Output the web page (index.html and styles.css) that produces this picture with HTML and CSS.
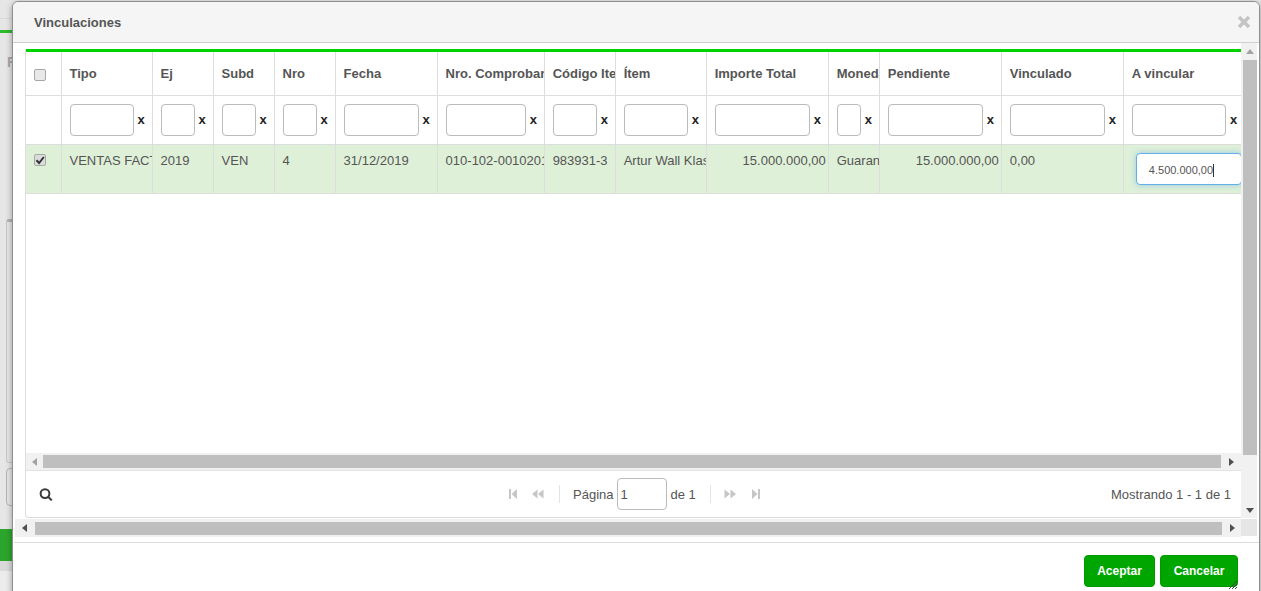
FILE: index.html
```html
<!DOCTYPE html>
<html lang="es">
<head>
<meta charset="utf-8">
<title>Vinculaciones</title>
<link rel="stylesheet" href="styles.css">
</head>
<body>
<div class="page">
  <div class="page-top"></div>
  <div class="page-green"></div>
  <div class="page-letter">F</div>
  <div class="page-panel"></div>
  <div class="page-box"></div>
  <div class="page-band"></div>
  <div class="page-btn"></div>
  <div class="page-foot"></div>
</div>
<section class="modal">
  <header class="modal-head">
    <h1>Vinculaciones</h1>
    <svg class="close" viewBox="0 0 14 14" width="14" height="14"><path d="M2 2l10 10M12 2L2 12"/></svg>
  </header>
  <div class="modal-body">
    <div class="main">
      <div class="grid">
        <div class="table-wrap">
          <table>
            <colgroup>
              <col class="c-check"><col class="c-tipo"><col class="c-small"><col class="c-small"><col class="c-small"><col class="c-fecha"><col class="c-comp"><col class="c-cod"><col class="c-tipo"><col class="c-imp"><col class="c-mon"><col class="c-imp"><col class="c-imp"><col class="c-av">
            </colgroup>
            <thead>
              <tr class="heads">
                <th class="check-cell"><span class="check head-check"></span></th>
                <th>Tipo</th><th>Ej</th><th>Subd</th><th>Nro</th><th>Fecha</th><th>Nro. Comprobante</th><th>Código Item</th><th>Ítem</th><th>Importe Total</th><th>Moneda</th><th>Pendiente</th><th>Vinculado</th><th>A vincular</th>
              </tr>
              <tr class="filters">
                <th></th>
                <th><div class="filter"><input type="text"><b>x</b></div></th>
                <th><div class="filter"><input type="text"><b>x</b></div></th>
                <th><div class="filter"><input type="text"><b>x</b></div></th>
                <th><div class="filter"><input type="text"><b>x</b></div></th>
                <th><div class="filter"><input type="text"><b>x</b></div></th>
                <th><div class="filter"><input type="text"><b>x</b></div></th>
                <th><div class="filter"><input type="text"><b>x</b></div></th>
                <th><div class="filter"><input type="text"><b>x</b></div></th>
                <th><div class="filter"><input type="text"><b>x</b></div></th>
                <th><div class="filter"><input type="text"><b>x</b></div></th>
                <th><div class="filter"><input type="text"><b>x</b></div></th>
                <th><div class="filter"><input type="text"><b>x</b></div></th>
                <th><div class="filter"><input type="text"><b>x</b></div></th>
              </tr>
            </thead>
            <tbody>
              <tr class="row">
                <td class="check-cell"><span class="check on"><svg viewBox="0 0 12 12" width="12" height="12"><path d="M2.500 6.200l2.600 2.800L9.800 3"/></svg></span></td>
                <td>VENTAS FACTURA</td><td>2019</td><td>VEN</td><td>4</td><td>31/12/2019</td><td>010-102-0010201</td><td>983931-3</td><td>Artur Wall Klassen</td>
                <td class="num">15.000.000,00</td><td>Guaraníes</td><td class="num">15.000.000,00</td><td>0,00</td>
                <td class="edit-cell"><div class="edit">4.500.000,00<span class="caret"></span></div></td>
              </tr>
            </tbody>
          </table>
        </div>
        <div class="hbar inner">
          <span class="arrow dim"><svg viewBox="0 0 6 8" width="6" height="8"><path d="M5 0v8L0 4z"/></svg></span>
          <span class="thumb"></span>
          <span class="arrow"><svg viewBox="0 0 6 8" width="6" height="8"><path d="M1 0v8l5-4z"/></svg></span>
        </div>
        <div class="pager">
          <svg class="search" viewBox="0 0 14 14" width="14" height="14"><circle cx="6" cy="6.600" r="4.400"/><path d="M9.400 10l3.400 3.400"/></svg>
          <div class="pager-mid">
            <svg class="pg" viewBox="0 0 10 12" width="10" height="12"><path d="M1 1h2v10H1zM9 1v10L3.500 6z"/></svg>
            <svg class="pg dbl" viewBox="0 0 13 12" width="13" height="12"><path d="M6.500 1.500v9L1 6zM12.500 1.500v9L7 6z"/></svg>
            <span class="sep first"></span>
            <span class="pg-label">Página</span>
            <input class="pg-input" type="text" value="1">
            <span class="pg-of">de 1</span>
            <span class="sep"></span>
            <svg class="pg dbl" viewBox="0 0 13 12" width="13" height="12"><path d="M.5 1.500v9L6 6zM6.500 1.500v9L12 6z"/></svg>
            <svg class="pg" viewBox="0 0 10 12" width="10" height="12"><path d="M1 1v10L6.500 6zM7 1h2v10H7z"/></svg>
          </div>
          <span class="count">Mostrando 1 - 1 de 1</span>
        </div>
      </div>
    </div>
    <div class="vbar">
      <span class="varrow dim"><svg viewBox="0 0 8 6" width="8" height="6"><path d="M0 5h8L4 0z"/></svg></span>
      <span class="vthumb"></span>
      <span class="varrow last"><svg viewBox="0 0 8 6" width="8" height="6"><path d="M0 1h8L4 6z"/></svg></span>
    </div>
    <div class="hbar outer">
      <span class="arrow"><svg viewBox="0 0 6 8" width="6" height="8"><path d="M5 0v8L0 4z"/></svg></span>
      <span class="thumb"></span>
      <span class="arrow"><svg viewBox="0 0 6 8" width="6" height="8"><path d="M1 0v8l5-4z"/></svg></span>
    </div>
    <div class="corner"></div>
  </div>
  <footer class="modal-foot">
    <button class="btn accept" type="button">Aceptar</button>
    <button class="btn cancel" type="button">Cancelar</button>
    <svg class="resizer" viewBox="0 0 8 8" width="8" height="8"><path d="M0 8l8-8M3 8l5-5M6 8l2-2"/></svg>
  </footer>
</section>
</body>
</html>
```

FILE: styles.css
```css
* { box-sizing: border-box; }
html, body { margin: 0; height: 100%; overflow: hidden; }
body {
  position: relative;
  background: #e6e6e6;
  font-family: "Liberation Sans", Arial, sans-serif;
  font-size: 13px;
  color: #555;
}

/* dimmed page behind the dialog */
.page { position: absolute; inset: 0; }
.page-top { position: absolute; left: 0; top: 0; width: 13px; height: 19px; background: #e6e6e6; border-bottom: 1px solid #d8d8d8; }
.page-green { position: absolute; left: 0; top: 30px; width: 13px; height: 3px; background: #2dbb2d; }
.page-letter { position: absolute; left: 7px; top: 54px; font-weight: 700; font-size: 14px; color: #a8a8a8; }
.page-panel { position: absolute; left: 6px; top: 219px; width: 20px; height: 244px; border: 1px solid #c8c8c8; border-top: 3px solid #b5b5b5; border-radius: 3px; }
.page-box { position: absolute; left: 6px; top: 468px; width: 20px; height: 38px; border: 1px solid #b5b5b5; border-radius: 4px; }
.page-band { position: absolute; left: 0; top: 561px; width: 13px; height: 10px; background: #dadada; }
.page-btn { position: absolute; left: 0; top: 529px; width: 20px; height: 32px; background: #2ca52c; }
.page-foot { position: absolute; left: 0; top: 571px; width: 13px; height: 20px; background: #ececec; }

/* dialog */
.modal {
  position: absolute;
  left: 12px;
  top: 1px;
  width: 1248px;
  height: 600px;
  background: #fff;
  border: 1px solid #8f8f8f;
  border-radius: 6px;
  box-shadow: 0 2px 6px rgba(0, 0, 0, .35);
  display: flex;
  flex-direction: column;
}
.modal-head {
  height: 41px;
  flex: none;
  padding: 0 8px 0 21px;
  background: #f5f5f5;
  border-bottom: 1px solid #cfcfcf;
  border-radius: 6px 6px 0 0;
  display: flex;
  align-items: center;
  justify-content: space-between;
}
.modal-head h1 { margin: 0; font-size: 13px; font-weight: 700; color: #555; }
.close { fill: none; stroke: #c4c4c4; stroke-width: 3.400; }

.modal-body {
  flex: none;
  display: grid;
  grid-template-columns: 1228px 16px;
  grid-template-rows: 475px 18px;
}
.main { padding: 6px 0 0 12px; min-width: 0; }
.grid {
  height: 469px;
  border-left: 1px solid #ddd;
  border-bottom: 1px solid #ddd;
  border-radius: 0 0 0 4px;
  display: flex;
  flex-direction: column;
}
.table-wrap {
  height: 404px;
  flex: none;
  overflow: hidden;
  border-top: 3px solid #00d200;
}
table {
  table-layout: fixed;
  border-collapse: collapse;
  width: 1219px;
}
.c-check { width: 35px; }
.c-tipo { width: 91px; }
.c-small { width: 61px; }
.c-fecha { width: 102px; }
.c-comp { width: 107px; }
.c-cod { width: 71px; }
.c-imp { width: 122px; }
.c-mon { width: 51px; }
.c-av { width: 121px; }

th, td {
  border: 1px solid #ddd;
  border-top: 0;
  padding: 0 0 0 8px;
  overflow: hidden;
  white-space: nowrap;
  text-align: left;
}
th:first-child, td:first-child { border-left: 0; }
.heads th { height: 43px; font-size: 13px; font-weight: 700; color: #555; vertical-align: middle; }
.filters th { height: 49px; vertical-align: middle; }
.row td { height: 49px; vertical-align: top; padding-top: 8px; font-size: 13px; background: #dff0d8; color: #555; }
.row td.num { text-align: right; padding: 8px 2px 0 0; }
.row td.check-cell { padding-top: 9px; }

.check {
  display: block;
  width: 12px;
  height: 12px;
  background: #e8e8e8;
  border: 1px solid #a8a8a8;
  border-radius: 2px;
}
.head-check { margin-top: 4px; }
.check.on { background: #dcdcdc; }
.check svg { display: block; margin: -1px; fill: none; stroke: #333; stroke-width: 2; }

.filter { display: flex; align-items: center; }
.filter input {
  flex: 1 1 0;
  min-width: 0;
  width: 0;
  height: 32px;
  margin: 0;
  padding: 0 6px;
  background: #fff;
  border: 1px solid #bbb;
  border-radius: 4px;
}
.filter b { flex: none; width: 18px; padding-left: 4px; font-size: 13px; font-weight: 700; color: #222; }

.row td.edit-cell { padding: 8px 0 0 12px; }
.edit {
  width: 106px;
  height: 32px;
  line-height: 32px;
  padding-left: 12px;
  font-size: 11px;
  color: #555;
  background: #fff;
  border: 1px solid #66afe9;
  border-radius: 4px;
  box-shadow: 0 0 6px rgba(102, 175, 233, .6);
}
.caret { display: inline-block; width: 1px; height: 13px; background: #333; vertical-align: -3px; }

/* scrollbars */
.hbar { display: flex; align-items: center; background: #f1f1f1; flex: none; }
.hbar.inner { height: 17px; }
.hbar.outer { height: 18px; margin: 1px 0 0 2px; }
.arrow { flex: none; width: 17px; display: flex; align-items: center; justify-content: center; }
.arrow svg, .varrow svg { display: block; fill: #505050; }
.arrow.dim svg, .varrow.dim svg { fill: #a3a3a3; }
.thumb { flex: 1; height: 13px; background: #bfbfbf; }
.hbar.outer .arrow:first-child { width: 20px; }
.hbar.outer .arrow:last-child { width: 19px; }
.hbar.inner .arrow:last-child { width: 20px; }

.vbar { background: #f1f1f1; display: flex; flex-direction: column; align-items: center; padding-left: 2px; }
.varrow { flex: none; height: 17px; display: flex; align-items: center; justify-content: center; }
.varrow.last { margin-top: auto; }
.vthumb { flex: none; height: 395px; width: 14px; background: #bfbfbf; }
.corner { background: #e6e6e6; margin-top: 1px; }

/* pager */
.pager {
  flex: 1;
  position: relative;
  display: flex;
  align-items: center;
  justify-content: space-between;
  border-top: 1px solid #e3e3e3;
  padding: 0 10px 0 13px;
  font-size: 13px;
  color: #555;
}
.search { fill: none; stroke: #3a3a3a; stroke-width: 2; }
.pager-mid { position: absolute; left: 482px; top: 0; bottom: 0; display: flex; align-items: center; }
.pg { flex: none; fill: #c6c6c6; }
.pg.dbl { margin-left: 13px; }
.sep { flex: none; width: 1px; height: 18px; background: #e3e3e3; margin: 0 13px 0 14px; }
.sep.first { margin-left: 15px; }
.sep + .pg.dbl { margin-left: 0; }
.pg.dbl + .pg { margin-left: 14px; }
.pg-input {
  width: 50px;
  height: 32px;
  margin: 0 3px 0 4px;
  padding: 0 2px;
  font: 13px "Liberation Sans", Arial, sans-serif;
  color: #555;
  background: #fff;
  border: 1px solid #bbb;
  border-radius: 4px;
}

/* footer */
.modal-foot {
  position: relative;
  margin-top: 6px;
  border-top: 1px solid #ddd;
  margin-left: 1px;
  padding: 12px 21px 0 0;
  display: flex;
  justify-content: flex-end;
  gap: 5px;
}
.btn {
  height: 32px;
  padding: 0;
  font: 700 12px "Liberation Sans", Arial, sans-serif;
  color: #fff;
  background: #00a600;
  border: 1px solid #009a00;
  border-radius: 4px;
}
.accept { width: 71px; }
.cancel { width: 78px; }
.resizer { position: absolute; right: 22px; top: 38px; stroke: #444; stroke-width: 1; fill: none; }
```
